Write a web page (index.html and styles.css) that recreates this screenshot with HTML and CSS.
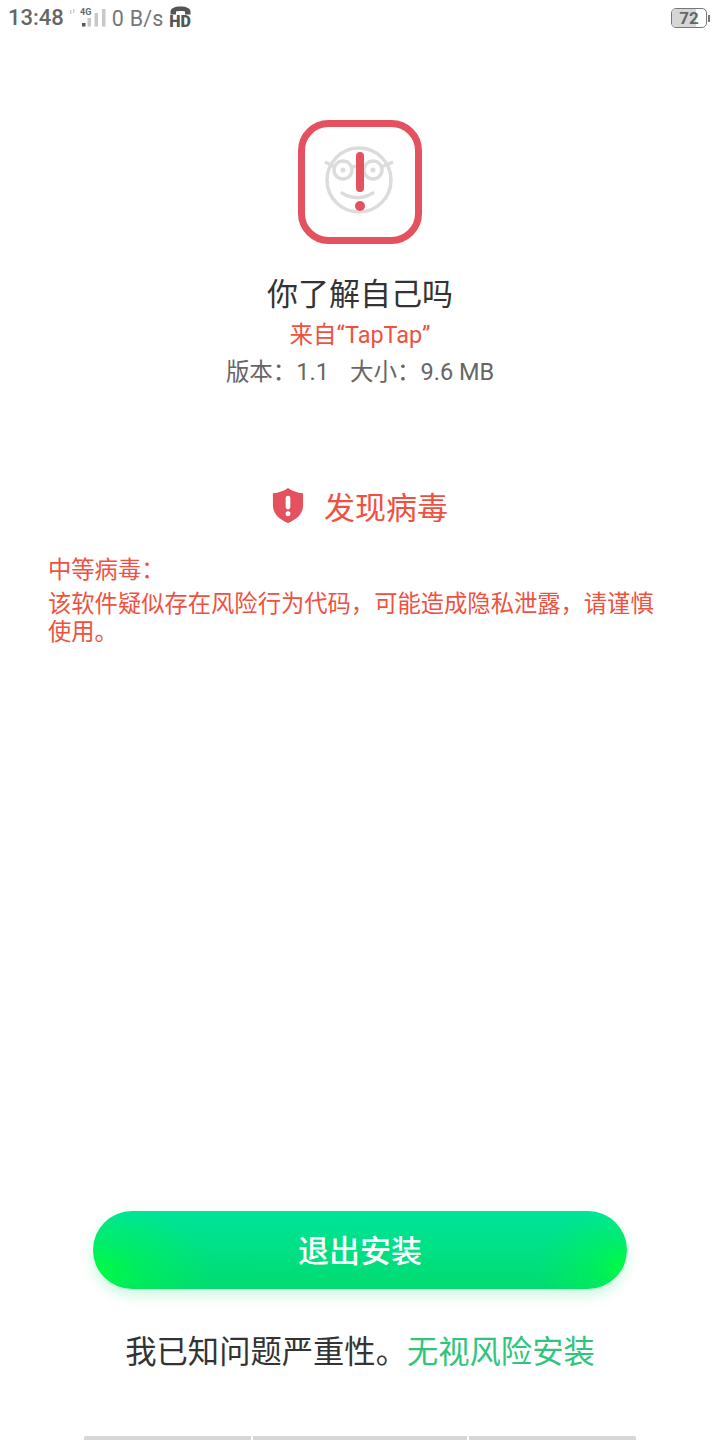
FILE: index.html
```html
<!DOCTYPE html>
<html lang="zh-CN">
<head>
<meta charset="utf-8">
<title>发现病毒</title>
<link rel="stylesheet" href="styles.css">
</head>
<body>
<div class="page">
  <header class="status">
    <div class="status-left">
      <span class="time">13:48</span>
      <svg class="signal" width="37" height="22" viewBox="0 0 37 22">
        <g fill="#cfcfcf"><rect x="1" y="5" width="1.500" height="4"/><rect x="4" y="4" width="1.500" height="4"/></g>
        <text x="11" y="10" class="net">4G</text>
        <rect x="13" y="18" width="3.500" height="3.500" fill="#555"/>
        <rect x="18.500" y="13" width="3.500" height="8.500" fill="#c8c8c8"/>
        <rect x="25.500" y="8" width="3.500" height="13.500" fill="#c8c8c8"/>
        <rect x="33" y="4" width="3.500" height="17.500" fill="#c8c8c8"/>
      </svg>
      <span class="speed">0 B/s</span>
      <span class="hd">
        <svg width="21" height="9" viewBox="0 0 21 9"><path d="M.5 8.500V5.500C.5 2.500 4.500 .5 10.500 .5s10 2 10 5v3h-5.500V5.500C13 4.800 8 4.800 6 5.500v3z" fill="#555"/></svg>
        <span class="hd-text">HD</span>
      </span>
    </div>
    <div class="battery">
      <div class="battery-body"><div class="battery-fill"></div><span class="battery-num">72</span></div>
      <div class="battery-tip"></div>
    </div>
  </header>

  <section class="app">
    <svg class="app-icon" width="124" height="124" viewBox="0 0 124 124">
      <rect x="3.500" y="3.500" width="117" height="117" rx="27" fill="#fff" stroke="#e3525e" stroke-width="7"/>
      <g fill="none" stroke="#dcdcdc" stroke-width="3.500">
        <circle cx="61" cy="60" r="32"/>
        <circle cx="45" cy="50" r="9"/>
        <circle cx="75" cy="50" r="9"/>
        <path d="M27 42l10 5M83 47l12-5M54 47c2-1 10-1 12 0"/>
        <path d="M44 73c10 6 21 6 31 0" stroke-linecap="round"/>
      </g>
      <circle cx="45" cy="50" r="2.500" fill="#dcdcdc"/>
      <circle cx="75" cy="50" r="2.500" fill="#dcdcdc"/>
      <rect x="58" y="32" width="8" height="40" rx="4" fill="#e3525e"/>
      <circle cx="62" cy="86" r="5" fill="#e3525e"/>
    </svg>
    <h1 class="app-name">你了解自己吗</h1>
    <p class="app-source">来自“TapTap”</p>
    <p class="app-meta"><span>版本：1.1</span><span>大小：9.6 MB</span></p>
  </section>

  <section class="warning">
    <div class="warning-head">
      <svg class="shield" width="32" height="35" viewBox="0 0 34 36" preserveAspectRatio="none">
        <path d="M17 0c4 3 10 5 16 5.500V18c0 8-6 14-16 18C7 32 1 26 1 18V5.500C7 5 13 3 17 0z" fill="#e3525e"/>
        <rect x="14.500" y="8" width="5" height="14" rx="2.500" fill="#fff"/>
        <circle cx="17" cy="26.500" r="2.600" fill="#fff"/>
      </svg>
      <h2 class="warning-title">发现病毒</h2>
    </div>
    <p class="warning-level">中等病毒：</p>
    <p class="warning-text">该软件疑似存在风险行为代码，可能造成隐私泄露，请谨慎使用。</p>
  </section>

  <section class="actions">
    <button class="exit">退出安装</button>
    <p class="ignore">我已知问题严重性。<span class="ignore-link">无视风险安装</span></p>
  </section>

  <div class="bottom-bars">
    <div class="bar bar-a"></div>
    <div class="bar bar-b"></div>
    <div class="bar bar-c"></div>
  </div>
</div>
</body>
</html>
```

FILE: styles.css
```css
* { box-sizing: border-box; margin: 0; padding: 0; }
html, body { width: 720px; height: 1440px; background: #fff; overflow: hidden; }
body { font-family: Roboto, "Noto Sans CJK SC", sans-serif; }
.page { width: 720px; height: 1440px; display: flex; flex-direction: column; }

.status { height: 36px; flex: none; display: flex; justify-content: space-between; align-items: center; padding: 0 10px 0 8px; color: #666; }
.status-left { display: flex; align-items: center; }
.time { font-size: 22px; font-weight: 500; color: #666; line-height: 36px; }
.signal { margin-left: 5px; margin-top: -4px; }
.net { font: 700 9px Roboto, sans-serif; fill: #666; }
.speed { font-size: 21.500px; margin-left: 6px; color: #777; letter-spacing: .2px; }
.hd { margin-left: 6px; display: flex; flex-direction: column; align-items: center; width: 21px; margin-top: -2px; }
.hd-text { font-size: 16px; font-weight: 900; line-height: 13px; color: #555; }
.battery { display: flex; align-items: center; }
.battery-body { position: relative; width: 36px; height: 20px; border: 1.500px solid #777; border-radius: 5px; overflow: hidden; display: flex; align-items: center; justify-content: center; }
.battery-fill { position: absolute; left: 0; top: 0; bottom: 0; width: 72%; background: #d6d6d6; }
.battery-num { position: relative; font-size: 17px; font-weight: 700; color: #666; line-height: 1; }
.battery-tip { width: 2px; height: 7px; background: #777; margin-left: 1px; }

.app { display: flex; flex-direction: column; align-items: center; padding-top: 84px; }
.app-icon { display: block; }
.app-name { font-size: 31px; font-weight: 400; color: #333; line-height: 44px; margin-top: 29px; }
.app-source { font-size: 23.500px; color: #f0513f; line-height: 34px; margin-top: 1px; }
.app-meta { font-size: 23.500px; color: #666; line-height: 34px; margin-top: 3px; display: flex; gap: 21px; }

.warning { padding: 98px 48px 0; }
.warning-head { display: flex; justify-content: center; align-items: center; gap: 20px; }
.shield { margin-top: -7px; }
.warning-title { font-size: 31px; font-weight: 400; color: #f0513f; line-height: 44px; }
.warning-level { font-size: 23.300px; line-height: 29px; color: #f0513f; margin-top: 25px; }
.warning-text { font-size: 23.300px; line-height: 28px; color: #f0513f; margin-top: 5px; }

.actions { margin-top: auto; display: flex; flex-direction: column; align-items: center; }
.exit { width: 534px; height: 78px; border: 0; border-radius: 39px; color: #fff; font-family: inherit; font-size: 31px; font-weight: 500; padding-bottom: 3px;
  background:
    radial-gradient(ellipse 120px 70px at 0% 78%, rgba(0,255,60,.95) 0%, rgba(0,255,60,.4) 40%, rgba(0,255,60,0) 100%),
    radial-gradient(ellipse 90px 60px at 100% 72%, rgba(0,255,60,.95) 0%, rgba(0,255,60,.4) 40%, rgba(0,255,60,0) 100%),
    linear-gradient(180deg, #00e49a 0%, #00dc70 100%);
  box-shadow: 0 6px 14px rgba(0, 220, 110, .22); }
.ignore { font-size: 31.300px; line-height: 44px; color: #333; margin-top: 42px; }
.ignore-link { color: #2fc57c; }

.bottom-bars { display: flex; gap: 2px; padding: 0 84px; margin-top: 61px; height: 4px; flex: none; }
.bar { height: 4px; background: #d6d6d6; }
.bar-a { width: 167px; border-radius: 2px 0 0 0; }
.bar-b { width: 214px; }
.bar-c { width: 167px; border-radius: 0 2px 0 0; }
```
